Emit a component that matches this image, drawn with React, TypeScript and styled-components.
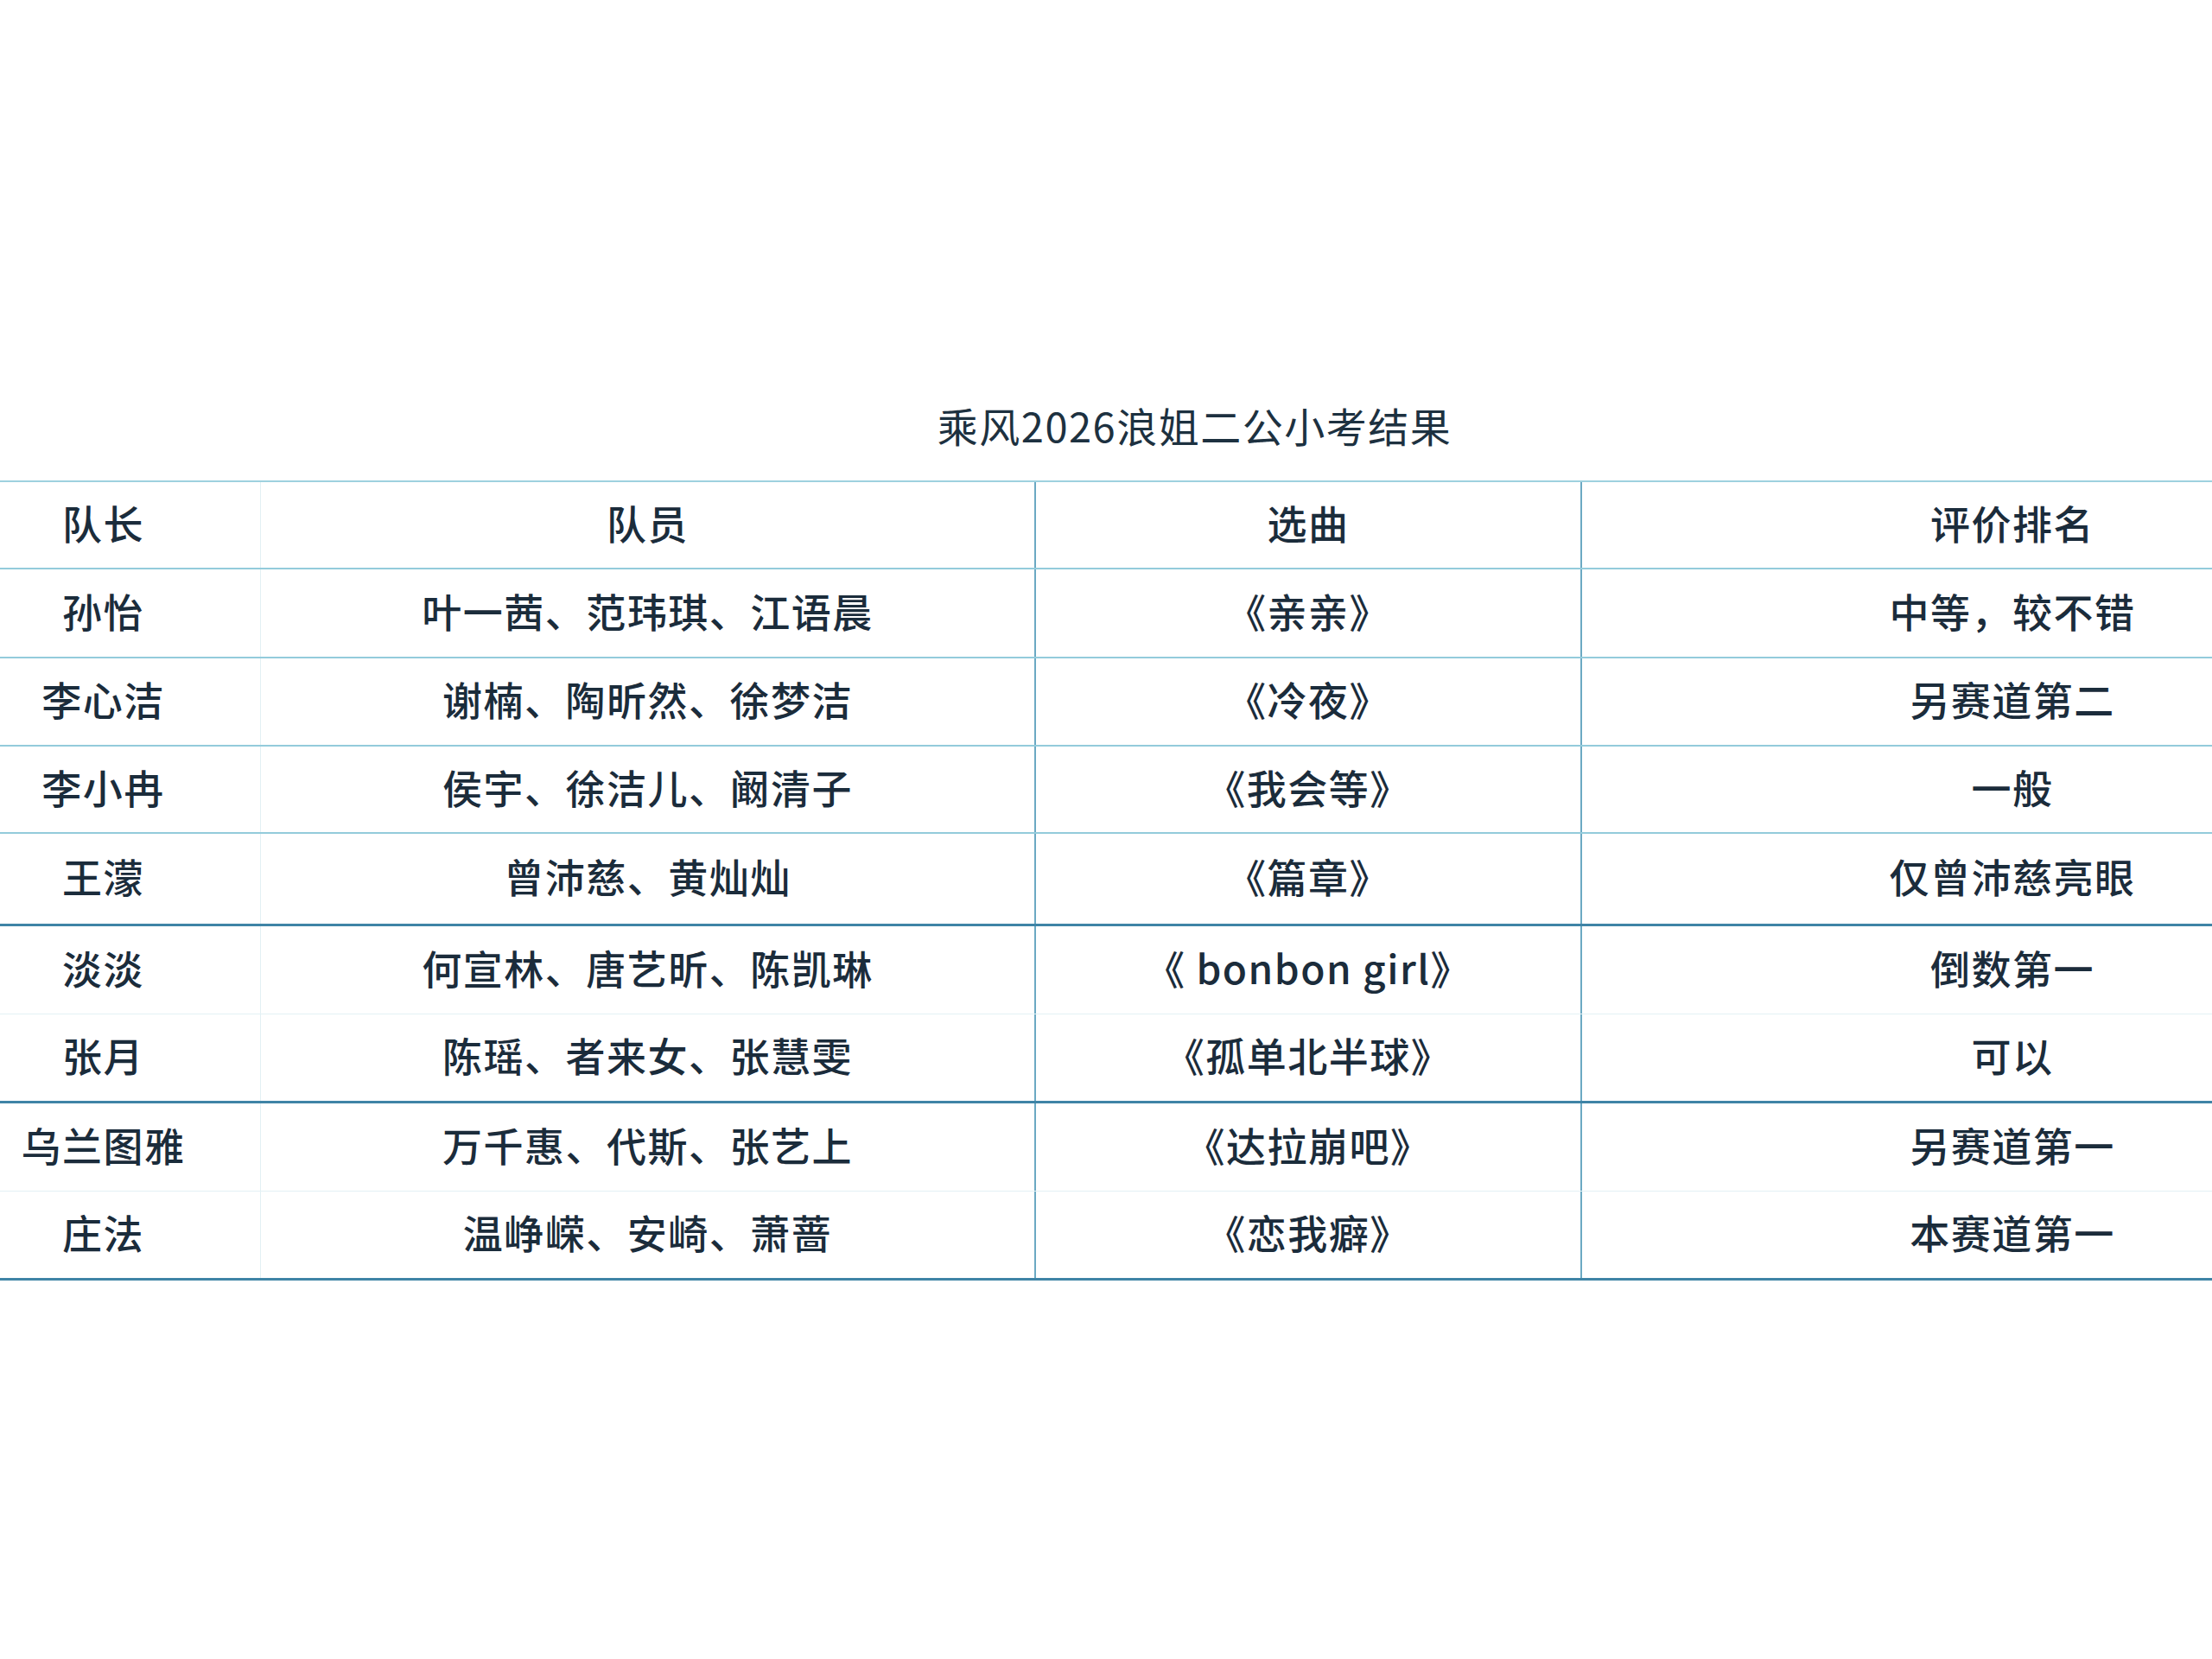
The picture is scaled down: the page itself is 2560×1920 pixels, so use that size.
import React from "react";
import styled, { createGlobalStyle } from "styled-components";

const Global = createGlobalStyle`
  html, body {
    margin: 0;
    padding: 0;
    background: #ffffff;
    overflow: hidden;
  }
  body {
    font-family: "Noto Sans CJK SC", "Noto Sans", sans-serif;
    color: #1b2c3b;
  }
`;

const Page = styled.div`
  width: 2560px;
  height: 1920px;
  background: #ffffff;
  padding-top: 462px;
  box-sizing: border-box;
  overflow: hidden;
`;

const Sheet = styled.div`
  width: 2889px;
  margin-left: -62px;
  display: flex;
  flex-direction: column;
`;

const Title = styled.h1`
  margin: 0 0 34px 0;
  height: 60px;
  line-height: 60px;
  text-align: center;
  font-family: "Noto Sans CJK SC", "Noto Sans", sans-serif;
  font-weight: 400;
  font-size: 47px;
  letter-spacing: 1.5px;
  color: #1d3140;
`;

type Edge = "medium" | "strong" | "faint";

const edgeColor: Record<Edge, string> = {
  medium: "#93cbdb",
  strong: "#3f84a6",
  faint: "#e3f1f5",
};
const edgeWidth: Record<Edge, number> = {
  medium: 2,
  strong: 3,
  faint: 1,
};

const Table = styled.div`
  display: flex;
  flex-direction: column;
  border-top: 2px solid #9ed1df;
`;

const Row = styled.div<{ $edge: Edge; $h: number }>`
  display: grid;
  grid-template-columns: 364px 897px 632px 996px;
  height: ${(p) => p.$h}px;
  box-sizing: border-box;
  border-bottom: ${(p) => edgeWidth[p.$edge]}px solid ${(p) => edgeColor[p.$edge]};
`;

type Divider = "faint" | "line" | "none";

const Cell = styled.div<{ $divider: Divider }>`
  display: flex;
  align-items: center;
  justify-content: center;
  box-sizing: border-box;
  padding-bottom: 8px;
  white-space: nowrap;
  font-size: 46px;
  font-weight: 500;
  letter-spacing: 1.5px;
  color: #1b2c3b;
  border-right: ${(p) =>
    p.$divider === "line"
      ? "2px solid #6ba9c3"
      : p.$divider === "faint"
      ? "1px solid #e2f0f4"
      : "none"};
`;

const dividers: Divider[] = ["faint", "line", "line", "none"];

const rows: { cells: string[]; edge: Edge; h: number }[] = [
  { cells: ["队长", "队员", "选曲", "评价排名"], edge: "medium", h: 101 },
  { cells: ["孙怡", "叶一茜、范玮琪、江语晨", "《亲亲》", "中等，较不错"], edge: "medium", h: 103 },
  { cells: ["李心洁", "谢楠、陶昕然、徐梦洁", "《冷夜》", "另赛道第二"], edge: "medium", h: 102 },
  { cells: ["李小冉", "侯宇、徐洁儿、阚清子", "《我会等》", "一般"], edge: "medium", h: 101 },
  { cells: ["王濛", "曾沛慈、黄灿灿", "《篇章》", "仅曾沛慈亮眼"], edge: "strong", h: 107 },
  { cells: ["淡淡", "何宣林、唐艺昕、陈凯琳", "《 bonbon girl》", "倒数第一"], edge: "faint", h: 102 },
  { cells: ["张月", "陈瑶、者来女、张慧雯", "《孤单北半球》", "可以"], edge: "strong", h: 103 },
  { cells: ["乌兰图雅", "万千惠、代斯、张艺上", "《达拉崩吧》", "另赛道第一"], edge: "faint", h: 102 },
  { cells: ["庄法", "温峥嵘、安崎、萧蔷", "《恋我癖》", "本赛道第一"], edge: "strong", h: 103 },
];

export default function App() {
  return (
    <Page>
      <Global />
      <Sheet>
        <Title>乘风2026浪姐二公小考结果</Title>
        <Table>
          {rows.map((r, i) => (
            <Row key={i} $edge={r.edge} $h={r.h}>
              {r.cells.map((c, j) => (
                <Cell key={j} $divider={dividers[j]}>
                  {c}
                </Cell>
              ))}
            </Row>
          ))}
        </Table>
      </Sheet>
    </Page>
  );
}
